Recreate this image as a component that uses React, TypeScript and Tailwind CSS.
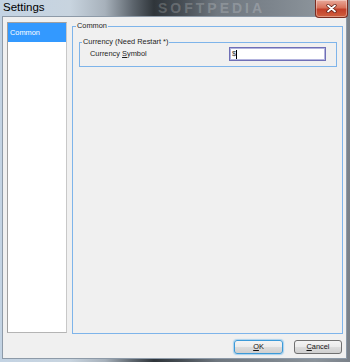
const font = { fontFamily: '"Liberation Sans", Arial, sans-serif' };

const CloseButton = () => (
  <div className="absolute top-0 right-[2px] w-[33px] h-[18px] rounded-b-[4px] border border-t-0 border-[#7a2c20] bg-[linear-gradient(to_bottom,#e9a99a_0%,#d8735c_45%,#c2402a_55%,#d0603f_100%)] flex items-center justify-center shadow-[inset_0_0_0_1px_rgba(255,255,255,0.35)]">
    <svg width="11" height="9" viewBox="0 0 11 9">
      <path d="M2 1.5 L9 7.5 M9 1.5 L2 7.5" stroke="#5a1a10" strokeWidth="3.2" strokeLinecap="round" />
      <path d="M2 1.5 L9 7.5 M9 1.5 L2 7.5" stroke="#ffffff" strokeWidth="1.8" strokeLinecap="round" />
    </svg>
  </div>
);

const Button = ({ label, hot, focused }: { label: string; hot: string; focused?: boolean }) => (
  <button
    className={
      focused
        ? "w-[49px] h-[14px] rounded-[3px] border border-[#3c9ad8] shadow-[0_0_1px_1px_rgba(120,190,240,0.6)] bg-[linear-gradient(to_bottom,#f4f4f4_0%,#ebebeb_50%,#dddddd_51%,#cfcfcf_100%)] text-[7.4px] leading-none text-[#111]"
        : "w-[48px] h-[14px] rounded-[3px] border border-[#707070] bg-[linear-gradient(to_bottom,#f4f4f4_0%,#ebebeb_50%,#dddddd_51%,#cfcfcf_100%)] text-[7.4px] leading-none text-[#111]"
    }
    style={font}
  >
    <u>{hot}</u>
    {label}
  </button>
);

export default function App() {
  return (
    <div
      className="relative w-[350px] h-[362px] overflow-hidden flex flex-col bg-[linear-gradient(to_right,#c3d3e3_0%,#c8d4df_20%,#a7b1bb_30%,#5d656d_38%,#2f353a_44%,#474e55_52%,#6f777f_62%,#7d858d_78%,#8b939a_90%,#7a8189_100%)]"
      style={font}
    >
      <div className="relative h-[16px] shrink-0 flex items-center pl-[3px]">
        <span className="text-[11.5px] leading-none text-black">Settings</span>
        <span className="absolute left-[158px] top-[1px] text-[14px] font-bold tracking-[3px] leading-none text-white/20">
          SOFTPEDIA
        </span>
        <CloseButton />
      </div>

      <div className="ml-[2px] mr-[3px] h-[343px] shrink-0 border border-[#8d9aa8] bg-[#f0f0f0] pt-[4px] pl-[4px] pr-[3px] flex flex-col">
        <div className="flex h-[313px]">
          <div className="w-[60px] h-[311px] mt-[1px] border border-[#a0a0a0] border-r-[#c8c8c8] border-b-[#b4b4b4] bg-white">
            <div className="h-[19px] bg-[#3399ff] flex items-center pl-[2px] text-[7.4px] leading-none text-white">
              Common
            </div>
          </div>

          <fieldset className="ml-[5px] flex-1 border border-[#7eb4ea] min-w-0">
            <legend className="ml-[3px] px-[1px] text-[7.4px] leading-[10px] text-[#1e1e1e]">Common</legend>
            <fieldset className="mt-[6px] ml-[6px] mr-[5px] border border-[#7eb4ea] pb-[5px]">
              <legend className="ml-[2px] px-[1px] text-[7.4px] leading-[10px] text-[#1e1e1e]">
                Currency (Need Restart *)
              </legend>
              <div className="flex items-center justify-between px-[10px]">
                <span className="text-[7.4px] leading-none text-[#1e1e1e]">
                  Currency <u>S</u>ymbol
                </span>
                <div className="w-[97px] h-[14px] border border-[#6f6fb6] shadow-[inset_0_0_0_1px_#b4b4de] bg-white flex items-center pl-[2px]">
                  <span className="text-[7.4px] leading-none text-[#333]">$</span>
                  <span className="w-[1px] h-[9px] bg-black" />
                </div>
              </div>
            </fieldset>
          </fieldset>
        </div>

        <div className="mt-[6px] mr-[1px] flex justify-end gap-[11px]">
          <Button hot="O" label="K" focused />
          <Button hot="C" label="ancel" />
        </div>
      </div>
    </div>
  );
}
